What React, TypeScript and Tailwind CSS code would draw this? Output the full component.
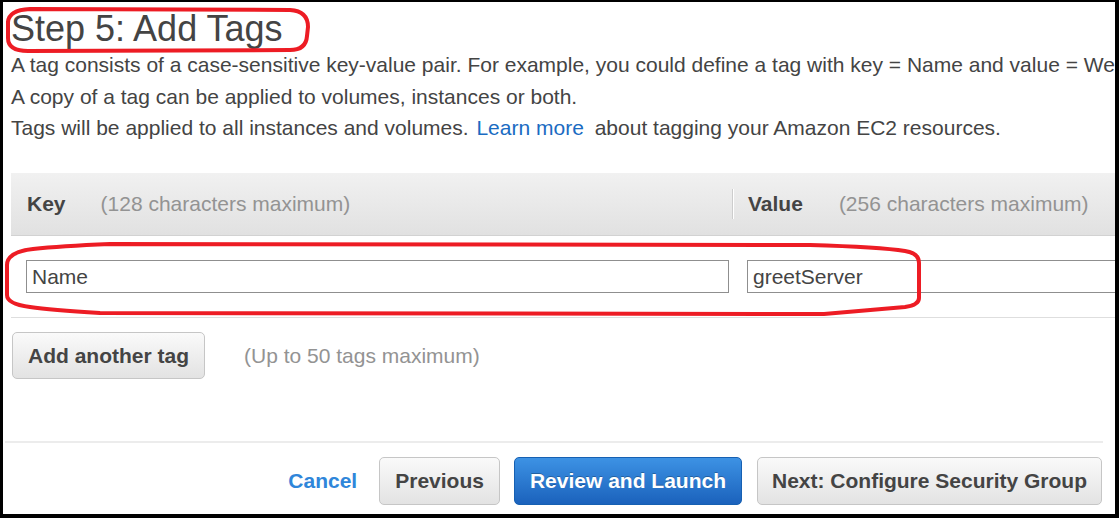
export default function App() {
  return (
    <div className="relative h-[518px] w-[1119px] bg-black pt-[2px] pl-[3px] pr-[4px] pb-[4px] font-['Liberation_Sans',Arial,sans-serif] text-[#444]">
      <div className="flex h-full flex-col overflow-hidden bg-white">
        {/* top part is wider than the window, clipped on the right */}
        <div className="w-[1400px] shrink-0 pl-[8px]">
          <h1 className="pt-[8px] text-[36px] leading-[38px] font-normal">Step 5: Add Tags</h1>
          <div className="whitespace-nowrap pt-[1px] text-[21px] leading-[31.5px]">
            <p>
              A tag consists of a case-sensitive key-value pair. For example, you could define a tag with key = Name
              and value = Webserver.
            </p>
            <p>A copy of a tag can be applied to volumes, instances or both.</p>
            <p>
              Tags will be applied to all instances and volumes.{' '}
              <a className="ml-[2px] mr-[5px] text-[#1a6bc2]">Learn more</a> about tagging your Amazon EC2 resources.
            </p>
          </div>

          <div className="mt-[29.5px] text-[21px]">
            <div className="grid h-[63px] grid-cols-[721px_1fr] border-b border-[#d2d2d2] bg-linear-to-b from-[#f1f1f1] to-[#e1e1e1]">
              <div className="flex items-center gap-[35px] pl-[16px]">
                <span className="font-bold">Key</span>
                <span className="text-[#939393]">(128 characters maximum)</span>
              </div>
              <div className="flex items-center">
                <div className="h-[30px] w-[1px] bg-[#cdcdcd] shadow-[1px_0_0_#fff]" />
                <span className="ml-[15px] font-bold">Value</span>
                <span className="ml-[36px] text-[#939393]">(256 characters maximum)</span>
              </div>
            </div>
            <div className="grid grid-cols-[721px_1fr] border-b border-[#dedede] py-[24px]">
              <div className="pl-[15px] pr-[3px]">
                <input
                  readOnly
                  value="Name"
                  className="h-[33px] w-full border border-[#8f8f8f] bg-white px-[5px] text-[21px] text-[#444] outline-none"
                />
              </div>
              <div className="pl-[15px]">
                <input
                  readOnly
                  value="greetServer"
                  className="h-[33px] w-full border border-[#8f8f8f] bg-white px-[5px] text-[21px] text-[#444] outline-none"
                />
              </div>
            </div>
            <div className="mt-[14px] flex items-center">
              <button className="ml-[1px] h-[47px] rounded-[5px] border border-[#c6c6c6] bg-linear-to-b from-[#fafafa] to-[#e3e3e3] px-[15px] text-[21px] font-bold text-[#444]">
                Add another tag
              </button>
              <span className="ml-[39px] text-[#939393]">(Up to 50 tags maximum)</span>
            </div>
          </div>
        </div>

        <div className="mt-auto pb-[9px] pl-[2px] pr-[12px]">
          <div className="h-[2px] bg-[#ececec]" />
          <div className="mt-[14px] flex items-center justify-end pr-[1px] text-[21px] font-bold">
            <a className="mr-[22px] text-[#2f86da]">Cancel</a>
            <button className="h-[48px] rounded-[5px] border border-[#c6c6c6] bg-linear-to-b from-[#fafafa] to-[#e3e3e3] px-[15px] text-[#444]">
              Previous
            </button>
            <button className="ml-[14px] h-[48px] rounded-[5px] border border-[#1660b2] bg-linear-to-b from-[#3d92e4] to-[#1b62bc] px-[15px] text-white [text-shadow:0_-1px_0_rgba(0,0,0,0.25)]">
              Review and Launch
            </button>
            <button className="ml-[15px] h-[48px] rounded-[5px] border border-[#c6c6c6] bg-linear-to-b from-[#fafafa] to-[#e3e3e3] px-[14px] text-[#444]">
              Next: Configure Security Group
            </button>
          </div>
        </div>
      </div>

      {/* red hand-drawn annotations */}
      <svg className="pointer-events-none absolute inset-0" width="1119" height="518" viewBox="0 0 1119 518" fill="none">
        <path
          d="M 30 9 L 290 10 Q 308 11 308 27 L 307 36 Q 306 50 290 50 L 28 51 Q 8 51 8 38 L 8 22 Q 9 10 30 9 Z"
          stroke="#ed1c24"
          strokeWidth="4"
        />
        <path
          d="M 33 249 Q 60 246 110 244 L 810 245 Q 880 247 905 251 Q 919 253 919 263 L 919 298 Q 919 305 905 307 Q 860 311 824 314 L 100 313 Q 50 310 30 307 Q 7 304 7 295 L 7 265 Q 7 252 33 249 Z"
          stroke="#ed1c24"
          strokeWidth="4"
        />
      </svg>
    </div>
  )
}
